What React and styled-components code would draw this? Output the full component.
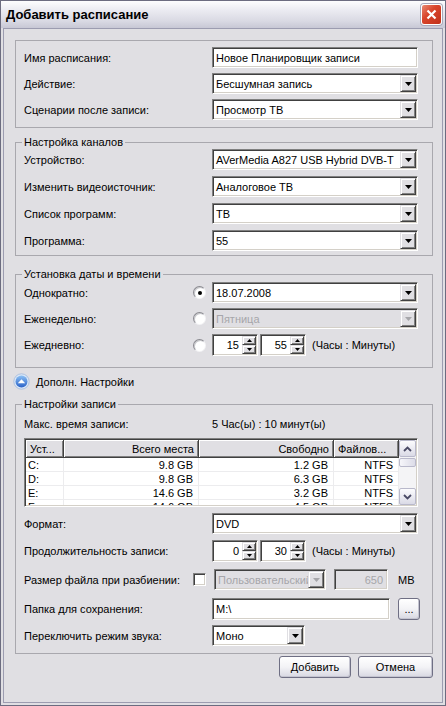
import React from "react";
import styled, { createGlobalStyle } from "styled-components";

const GlobalStyle = createGlobalStyle`
  html, body {
    margin: 0;
    padding: 0;
    background: #e0dfe3;
  }
  body {
    font-family: "Liberation Sans", Arial, sans-serif;
    font-size: 11px;
    color: #000;
  }
  * {
    box-sizing: border-box;
  }
`;

const drives = [
  ["C:", "9.8 GB", "1.2 GB", "NTFS"],
  ["D:", "9.8 GB", "6.3 GB", "NTFS"],
  ["E:", "14.6 GB", "3.2 GB", "NTFS"],
  ["F:", "14.6 GB", "4.5 GB", "NTFS"],
];

function Arrow({ up, color = "#000", w = 7, h = 4 }) {
  const pts = up ? `0,${h} ${w},${h} ${w / 2},0` : `0,0 ${w},0 ${w / 2},${h}`;
  return (
    <svg width={w} height={h} viewBox={`0 0 ${w} ${h}`}>
      <polygon points={pts} fill={color} />
    </svg>
  );
}

function Chevron({ up }) {
  return (
    <svg width="9" height="6" viewBox="0 0 9 6">
      <path
        d={up ? "M1 5 L4.5 1.5 L8 5" : "M1 1 L4.5 4.5 L8 1"}
        stroke="#4a4a66"
        strokeWidth="1.8"
        fill="none"
      />
    </svg>
  );
}

function Select({ value, w, disabled }) {
  return (
    <Field $w={w} $disabled={disabled}>
      <Value>{value}</Value>
      <DropButton>
        <Arrow color={disabled ? "#a6a6aa" : "#000"} />
      </DropButton>
    </Field>
  );
}

function SpinBox({ value }) {
  return (
    <Field $w={46} $h={22}>
      <Value $right>{value}</Value>
      <SpinButtons>
        <SpinBtn>
          <Arrow up w={5} h={3} />
        </SpinBtn>
        <SpinBtn>
          <Arrow w={5} h={3} />
        </SpinBtn>
      </SpinButtons>
    </Field>
  );
}

function App() {
  return (
    <>
      <GlobalStyle />
      <Window>
        <TitleBar>
          <Title>Добавить расписание</Title>
          <CloseButton>
            <svg width="11" height="11" viewBox="0 0 11 11">
              <path d="M1.5 1.5 L9.5 9.5 M9.5 1.5 L1.5 9.5" stroke="#fff" strokeWidth="2.2" />
            </svg>
          </CloseButton>
        </TitleBar>

        <Client>
          <Group $pad="6px 8px 7px">
            <Row>
              <Label>Имя расписания:</Label>
              <Field>
                <Value>Новое Планировщик записи</Value>
              </Field>
            </Row>
            <Row $gap={5}>
              <Label>Действие:</Label>
              <Select value="Бесшумная запись" />
            </Row>
            <Row $gap={5}>
              <Label>Сценарии после записи:</Label>
              <Select value="Просмотр ТВ" />
            </Row>
          </Group>

          <Group $top={7} $pad="0 8px 4px">
            <Legend>Настройка каналов</Legend>
            <Row>
              <Label>Устройство:</Label>
              <Select value="AVerMedia A827 USB Hybrid DVB-T" />
            </Row>
            <Row $gap={6}>
              <Label>Изменить видеоисточник:</Label>
              <Select value="Аналоговое ТВ" />
            </Row>
            <Row $gap={6}>
              <Label>Список программ:</Label>
              <Select value="ТВ" />
            </Row>
            <Row $gap={6}>
              <Label>Программа:</Label>
              <Select value="55" />
            </Row>
          </Group>

          <Group $top={11} $pad="1px 8px 11px">
            <Legend>Установка даты и времени</Legend>
            <Row>
              <Label $w={169}>Однократно:</Label>
              <Radio $checked />
              <Select value="18.07.2008" />
            </Row>
            <Row $gap={5}>
              <Label $w={169}>Еженедельно:</Label>
              <Radio />
              <Select value="Пятница" disabled />
            </Row>
            <Row $gap={5} $h={22}>
              <Label $w={169}>Ежедневно:</Label>
              <Radio />
              <SpinBox value="15" />
              <Spacer $w={2} />
              <SpinBox value="55" />
              <Hint>(Часы : Минуты)</Hint>
            </Row>
          </Group>

          <Toggle>
            <svg width="17" height="17" viewBox="0 0 17 17">
              <defs>
                <linearGradient id="tg" x1="0" y1="0" x2="0" y2="1">
                  <stop offset="0" stopColor="#8cc0f4" />
                  <stop offset="1" stopColor="#2a62c8" />
                </linearGradient>
              </defs>
              <circle cx="8.5" cy="8.5" r="7.7" fill="#dbe7f6" stroke="#9fb8dc" strokeWidth="0.8" />
              <circle cx="8.5" cy="8.5" r="6" fill="url(#tg)" />
              <polygon points="4.8,10.3 8.5,6.3 12.2,10.3" fill="#fff" />
            </svg>
            <span>Дополн. Настройки</span>
          </Toggle>

          <Group $top={7} $pad="4px 8px 7px">
            <Legend>Настройки записи</Legend>
            <Row $h={18}>
              <Label>Макс. время записи:</Label>
              <span>5 Час(ы) : 10 минут(ы)</span>
            </Row>

            <Table>
              <Grid>
                <HeadCell>Уст...</HeadCell>
                <HeadCell $right>Всего места</HeadCell>
                <HeadCell $right>Свободно</HeadCell>
                <HeadCell>Файлов...</HeadCell>
                {drives.map((d) =>
                  d.map((c, i) => (
                    <Cell key={d[0] + i} $right={i > 0}>
                      {c}
                    </Cell>
                  ))
                )}
              </Grid>
              <Scrollbar>
                <ScrollBtn>
                  <Chevron up />
                </ScrollBtn>
                <Thumb />
                <Track />
                <ScrollBtn>
                  <Chevron />
                </ScrollBtn>
              </Scrollbar>
            </Table>

            <Row $gap={6}>
              <Label>Формат:</Label>
              <Select value="DVD" />
            </Row>
            <Row $gap={6} $h={22}>
              <Label>Продолжительность записи:</Label>
              <SpinBox value="0" />
              <Spacer $w={2} />
              <SpinBox value="30" />
              <Hint>(Часы : Минуты)</Hint>
            </Row>
            <Row $gap={7}>
              <Label $w={169}>Размер файла при разбиении:</Label>
              <Checkbox />
              <Select value="Пользовательский" w={112} disabled />
              <Spacer $w={8} />
              <Field $w={54} $disabled>
                <Value $right>650</Value>
              </Field>
              <Spacer $w={10} />
              <span>MB</span>
            </Row>
            <Row $gap={8} $h={22}>
              <Label>Папка для сохранения:</Label>
              <Field $w={178} $h={22}>
                <Value>M:\</Value>
              </Field>
              <Spacer $w={8} />
              <Button $w={22}>...</Button>
            </Row>
            <Row $gap={5}>
              <Label>Переключить режим звука:</Label>
              <Select value="Моно" w={93} />
            </Row>
          </Group>

          <Actions>
            <Button $w={72}>Добавить</Button>
            <Button $w={75}>Отмена</Button>
          </Actions>
        </Client>
      </Window>
    </>
  );
}

export default App;

const Window = styled.div`
  width: 446px;
  height: 706px;
  display: flex;
  flex-direction: column;
  border: 1px solid #6c6c80;
  background: #e0dfe3;
`;

const TitleBar = styled.div`
  height: 27px;
  flex: none;
  display: flex;
  align-items: center;
  justify-content: space-between;
  padding: 0 3px 0 5px;
  background: linear-gradient(#fdfdfe 0%, #ededf3 30%, #d9d9e3 75%, #c8c8d5 100%);
`;

const Title = styled.div`
  font-size: 13px;
  font-weight: bold;
  color: #000;
`;

const CloseButton = styled.div`
  width: 21px;
  height: 21px;
  display: flex;
  align-items: center;
  justify-content: center;
  border: 1px solid #ffffff;
  border-radius: 3px;
  background: linear-gradient(135deg, #e98a73 0%, #d9452c 40%, #c1301a 100%);
  box-shadow: 0 0 0 1px #a8a8ba;
`;

const Client = styled.div`
  flex: 1;
  margin: 0 2px 2px;
  border: 1px solid #9c9cb0;
  padding: 11px 9px 0 11px;
  background: #e0dfe3;
`;

const Group = styled.fieldset`
  margin: ${(p) => p.$top || 0}px 0 0;
  padding: ${(p) => p.$pad};
  border: 1px solid #a9a8ae;
  min-width: 0;
`;

const Legend = styled.legend`
  padding: 0 2px;
  margin-left: -2px;
  line-height: 14px;
  font-size: 11px;
`;

const Row = styled.div`
  display: flex;
  align-items: center;
  height: ${(p) => p.$h || 21}px;
  margin-top: ${(p) => p.$gap || 0}px;
  white-space: nowrap;
`;

const Label = styled.div`
  width: ${(p) => p.$w || 188}px;
  flex: none;
  white-space: nowrap;
`;

const Field = styled.div`
  width: ${(p) => p.$w || 206}px;
  height: ${(p) => p.$h || 21}px;
  flex: none;
  display: flex;
  align-items: stretch;
  padding: 1px;
  border: 1px solid;
  border-color: #808080 #ffffff #ffffff #808080;
  box-shadow: inset 1px 1px 0 #404040, inset -1px -1px 0 #d4d0c8;
  background: ${(p) => (p.$disabled ? "#e0dfe3" : "#ffffff")};
  color: ${(p) => (p.$disabled ? "#a6a6aa" : "#000000")};
`;

const Value = styled.div`
  flex: 1;
  min-width: 0;
  display: flex;
  align-items: center;
  justify-content: ${(p) => (p.$right ? "flex-end" : "flex-start")};
  padding: 0 3px 0 2px;
  overflow: hidden;
  white-space: nowrap;
`;

const DropButton = styled.div`
  width: 16px;
  flex: none;
  display: flex;
  align-items: center;
  justify-content: center;
  background: #e0dfe3;
  border: 1px solid;
  border-color: #e0dfe3 #404040 #404040 #e0dfe3;
  box-shadow: inset 1px 1px 0 #ffffff, inset -1px -1px 0 #808080;
`;

const SpinButtons = styled.div`
  width: 14px;
  flex: none;
  display: flex;
  flex-direction: column;
`;

const SpinBtn = styled.div`
  flex: 1;
  display: flex;
  align-items: center;
  justify-content: center;
  background: #e0dfe3;
  border: 1px solid;
  border-color: #e0dfe3 #404040 #404040 #e0dfe3;
  box-shadow: inset 1px 1px 0 #ffffff, inset -1px -1px 0 #808080;
`;

const Spacer = styled.div`
  width: ${(p) => p.$w}px;
  flex: none;
`;

const Hint = styled.span`
  margin-left: 6px;
`;

const Radio = styled.span`
  width: 13px;
  height: 13px;
  flex: none;
  margin-right: 6px;
  border-radius: 50%;
  display: flex;
  align-items: center;
  justify-content: center;
  background: radial-gradient(circle at 60% 60%, #ffffff 50%, #e4e4e8 100%);
  border: 1px solid;
  border-color: #8a8a90 #f4f4f6 #f4f4f6 #8a8a90;
  box-shadow: inset 1px 1px 0 #c8c8cc;
  &::after {
    content: "";
    width: 4px;
    height: 4px;
    border-radius: 50%;
    background: #000;
    display: ${(p) => (p.$checked ? "block" : "none")};
  }
`;

const Checkbox = styled.span`
  width: 13px;
  height: 13px;
  flex: none;
  margin-right: 8px;
  background: #fff;
  border: 1px solid;
  border-color: #808080 #ffffff #ffffff #808080;
  box-shadow: inset 1px 1px 0 #404040, inset -1px -1px 0 #d4d0c8;
`;

const Toggle = styled.div`
  display: flex;
  align-items: center;
  gap: 6px;
  height: 17px;
  margin: 5px 0 0 -2px;
  svg {
    flex: none;
  }
`;

const Table = styled.div`
  margin-top: 5px;
  width: 394px;
  height: 69px;
  display: flex;
  padding: 1px;
  background: #fff;
  border: 1px solid;
  border-color: #808080 #ffffff #ffffff #808080;
  box-shadow: inset 1px 1px 0 #404040, inset -1px -1px 0 #d4d0c8;
`;

const Grid = styled.div`
  flex: 1;
  display: grid;
  grid-template-columns: 38px 135px 135px 65px;
  grid-template-rows: 18px;
  grid-auto-rows: 14px;
  align-content: start;
  overflow: hidden;
`;

const HeadCell = styled.div`
  display: flex;
  align-items: center;
  justify-content: ${(p) => (p.$right ? "flex-end" : "flex-start")};
  padding: 0 4px 0 4px;
  background: #e0dfe3;
  border-right: 1px solid #404040;
  border-bottom: 1px solid #404040;
  box-shadow: inset 1px 1px 0 #ffffff, inset -1px -1px 0 #808080;
  white-space: nowrap;
  overflow: hidden;
`;

const Cell = styled.div`
  display: flex;
  align-items: center;
  justify-content: ${(p) => (p.$right ? "flex-end" : "flex-start")};
  padding: 0 5px 0 2px;
  border-right: 1px solid #ececee;
  border-bottom: 1px solid #ececee;
  white-space: nowrap;
`;

const Scrollbar = styled.div`
  width: 17px;
  flex: none;
  display: flex;
  flex-direction: column;
  background: #f4f4f6;
`;

const ScrollBtn = styled.div`
  height: 17px;
  flex: none;
  display: flex;
  align-items: center;
  justify-content: center;
  border: 1px solid #b9b9cb;
  border-radius: 2px;
  background: linear-gradient(#fcfcfe, #dadae6);
`;

const Thumb = styled.div`
  height: 9px;
  margin-top: 1px;
  flex: none;
  border: 1px solid #b9b9cb;
  border-radius: 2px;
  background: linear-gradient(90deg, #f6f6fa, #dcdce8);
`;

const Track = styled.div`
  flex: 1;
`;

const Button = styled.button`
  width: ${(p) => p.$w}px;
  height: 22px;
  flex: none;
  padding: 0;
  font-family: "Liberation Sans", Arial, sans-serif;
  font-size: 11px;
  color: #000;
  border: 1px solid #6f6f84;
  border-radius: 3px;
  background: linear-gradient(#ffffff 0%, #f3f3f6 50%, #d8d8e2 100%);
  box-shadow: inset -1px -1px 0 #c4c4d0;
`;

const Actions = styled.div`
  display: flex;
  justify-content: flex-end;
  gap: 7px;
  margin-top: 2px;
`;
